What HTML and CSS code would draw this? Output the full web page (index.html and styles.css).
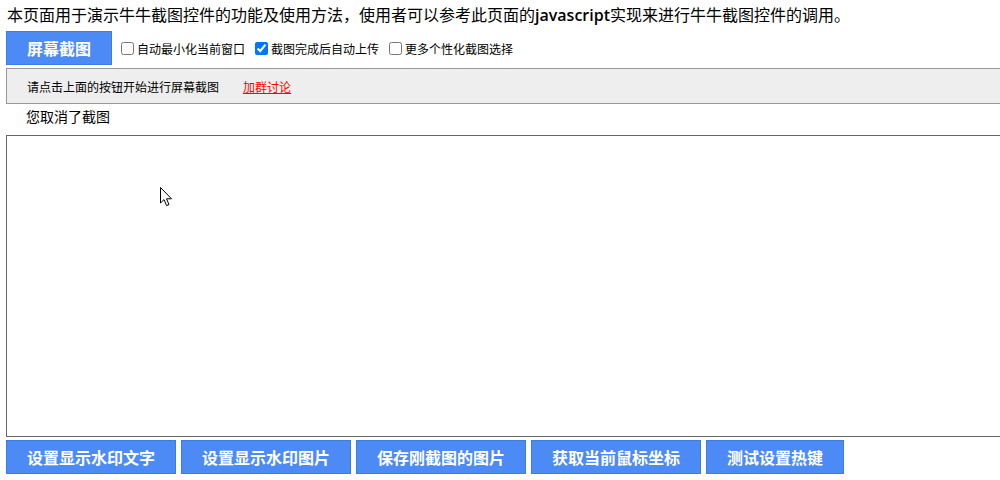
FILE: index.html
```html
<!DOCTYPE html>
<html lang="zh-CN">
<head>
    <meta charset="UTF-8">
    <title>牛牛截图控件演示</title>
    <link rel="stylesheet" href="styles.css">
</head>
<body>

    <p class="intro">本页面用于演示牛牛截图控件的功能及使用方法，使用者可以参考此页面的<b>javascript</b>实现来进行牛牛截图控件的调用。</p>

    <div class="toolbar">
        <button class="btn">屏幕截图</button>
        <label class="opt"><input type="checkbox">自动最小化当前窗口</label>
        <label class="opt"><input type="checkbox" checked>截图完成后自动上传</label>
        <label class="opt"><input type="checkbox">更多个性化截图选择</label>
    </div>

    <div class="tipbar">
        <span>请点击上面的按钮开始进行屏幕截图</span>
        <a href="#" class="group-link">加群讨论</a>
    </div>

    <div class="status">您取消了截图</div>

    <!-- preview area for the captured image -->
    <div class="preview">
        <svg class="cursor" width="13" height="20" viewBox="0 0 13 20">
            <path d="M0.5 0.5 L0.5 16 L4 12.6 L6.6 18.6 L9 17.6 L6.5 11.8 L11.5 11.8 Z" fill="#fff" stroke="#000" stroke-width="1" stroke-linejoin="miter"/>
        </svg>
    </div>

    <div class="actions">
        <button class="btn">设置显示水印文字</button>
        <button class="btn">设置显示水印图片</button>
        <button class="btn">保存刚截图的图片</button>
        <button class="btn">获取当前鼠标坐标</button>
        <button class="btn">测试设置热键</button>
    </div>

</body>
</html>
```

FILE: styles.css
```css
html, body {
    overflow: hidden;
}

body {
    font-family: "Microsoft YaHei", "Noto Sans CJK SC", "Noto Sans", sans-serif;
    margin: 0;
    padding: 0 0 0 6px;
    color: #000;
    background-color: #fff;
}

.intro {
    margin: 4px 0 0 1px;
    font-size: 16px;
    line-height: 20px;
}

.intro b {
    font-family: "Open Sans", "Noto Sans", sans-serif;
    font-weight: 600;
}

.btn {
    font-family: "Microsoft YaHei", "Noto Sans CJK SC", sans-serif;
    font-size: 16px;
    font-weight: bold;
    color: #fff;
    background-color: #4c8bf5;
    border: 1px solid #3a7de8;
    height: 34px;
    padding: 0 20px;
    margin: 0;
    cursor: pointer;
    line-height: 32px;
}

.toolbar {
    display: flex;
    align-items: center;
    margin-top: 6px;
    height: 34px;
}

.toolbar .btn {
    width: 106px;
    padding: 0;
}

.opt {
    display: flex;
    align-items: center;
    font-size: 12px;
    margin-left: 5px;
}

.opt input {
    width: 13px;
    height: 13px;
    margin: 0 3px 0 4px;
}

.opt + .opt {
    margin-left: 6px;
}

.tipbar {
    margin-top: 3px;
    height: 34px;
    width: 974px;
    background-color: #eee;
    border: 1px solid #999;
    border-right: none;
    font-size: 12px;
    display: flex;
    align-items: center;
    padding-left: 20px;
}

.group-link {
    color: #f00;
    margin-left: 24px;
    text-decoration: underline;
}

.status {
    font-size: 14px;
    line-height: 20px;
    margin: 2px 0 0 20px;
}

.preview {
    position: relative;
    margin-top: 9px;
    width: 993px;
    height: 300px;
    border: 1px solid #666;
    border-right: none;
}

.cursor {
    position: absolute;
    left: 153px;
    top: 51px;
}

.actions {
    display: flex;
    gap: 5px;
    margin-top: 3px;
}

.actions .btn {
    width: 170px;
    padding: 0;
}

.actions .btn:last-child {
    width: 138px;
}
```
